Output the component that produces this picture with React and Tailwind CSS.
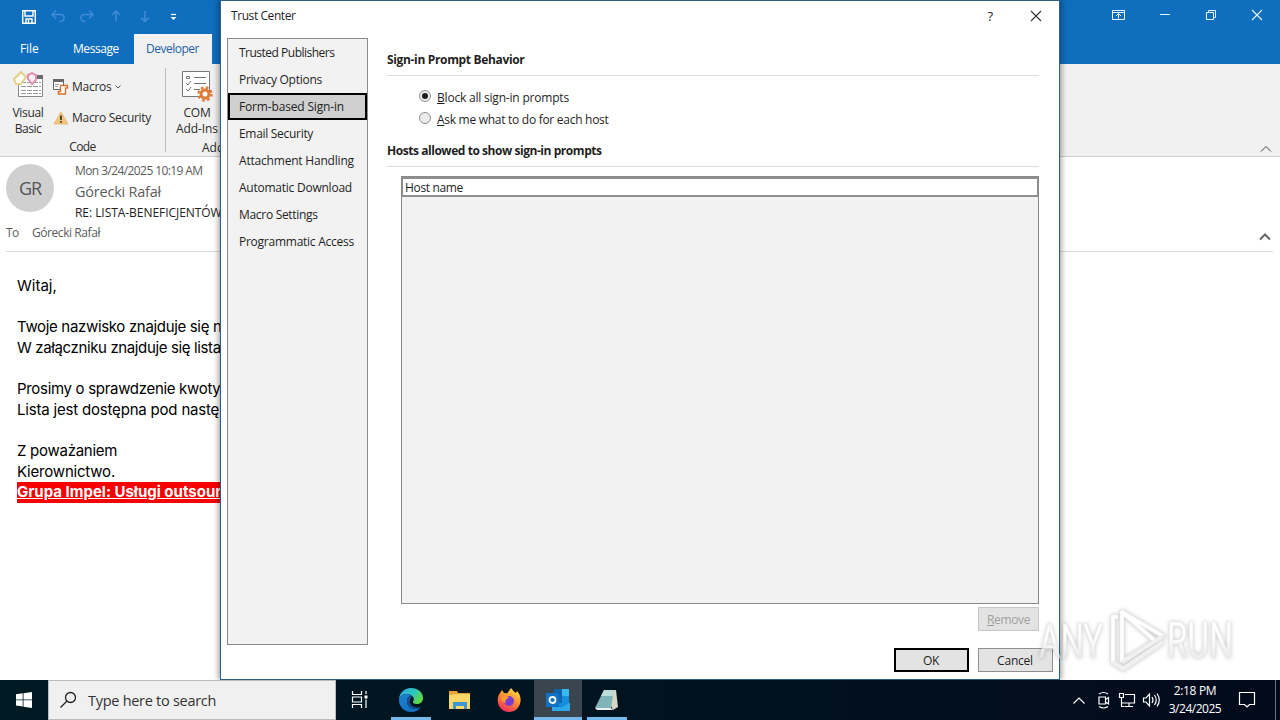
import React from "react";

const sidebar = [
  ["Trusted Publishers", "tracking-[-0.5px]"],
  ["Privacy Options", "tracking-[-0.27px]"],
  ["Form-based Sign-in", "tracking-[-0.16px]"],
  ["Email Security", "tracking-[-0.3px]"],
  ["Attachment Handling", "tracking-[-0.2px]"],
  ["Automatic Download", "tracking-[-0.24px]"],
  ["Macro Settings", "tracking-[-0.3px]"],
  ["Programmatic Access", "tracking-[-0.25px]"],
];

const mail = [
  ["Witaj,", "mt-0"],
  ["Twoje nazwisko znajduje się n", "mt-[21px] tracking-[-0.33px]"],
  ["W załączniku znajduje się lista", "mt-0 tracking-[-0.37px]"],
  ["Prosimy o sprawdzenie kwoty", "mt-[21px] tracking-[-0.31px]"],
  ["Lista jest dostępna pod nastę", "mt-0 tracking-[-0.19px]"],
  ["Z poważaniem", "mt-[21px] tracking-[-0.27px]"],
  ["Kierownictwo.", "mt-0 tracking-[-0.2px]"],
];

function TitleBar() {
  return (
    <div className="flex h-[34px] shrink-0 items-center justify-between text-white">
      <svg width="200" height="34" viewBox="0 0 200 34" fill="none">
        <path d="M22.7 10.7h12.6v12.6H22.7z" stroke="#fff" strokeWidth="1.4" />
        <path d="M25 11v5h8v-5M26 23v-4h6v4M28.500 20v3" stroke="#fff" strokeWidth="1.4" />
        <g stroke="#3f8bd6" strokeWidth="1.6">
          <path d="M56 10.500l-4 4 4 4M52.500 14.500h8c5 0 5 7-1 7" />
          <path d="M89 10.500l4 4-4 4M92.500 14.500h-8c-5 0-5 7 1 7" />
          <path d="M116 21.500V11M112 15l4-4 4 4" />
          <path d="M145 11v10.500M141 17.500l4 4 4-4" />
        </g>
        <path d="M171 14.500h5" stroke="#fff" strokeWidth="1.200" />
        <path d="M170.500 17h6l-3 3z" fill="#fff" />
      </svg>
      <svg width="180" height="34" viewBox="1100 0 180 34" fill="none" stroke="#e6f5ff">
        <path d="M1112.500 10.500h12v9h-12zM1112.500 12.500h12M1118.500 18.500v-5M1116 16l2.500-2.500 2.500 2.500" />
        <path d="M1160 14.500h10" />
        <path d="M1206.500 12.500h7v7h-7zM1208.500 12.500v-2h7v7h-2" />
        <path d="M1252 10l10 10M1262 10l-10 10" strokeWidth="1.100" />
      </svg>
    </div>
  );
}

function Tabs() {
  return (
    <div className="flex h-[30px] shrink-0 leading-[30px] text-white">
      <span className="w-[53px] pl-5 tracking-[-0.12px]">File</span>
      <span className="w-[81px] pl-5 tracking-[-0.45px]">Message</span>
      <span className="w-[78px] bg-[#f1f1f1] pl-3 tracking-[-0.49px] text-[#1f62a8]">Developer</span>
    </div>
  );
}

function Ribbon() {
  return (
    <div className="flex h-[93px] shrink-0 border-b border-[#cfcfcf] bg-[#f1f1f1] text-[#2b2b2b]">
      <div className="flex w-[165px] flex-col">
        <div className="flex h-[75px]">
          <div className="flex w-[56px] flex-col items-center pt-[6px] leading-4">
            <svg width="34" height="30" viewBox="0 0 34 30" fill="none" className="mb-[5px]">
              <path d="M7.500 6.500h24v20h-24z" fill="#fff" stroke="#888" />
              <path d="M25 5h7v4h-7z" fill="#6b6b6b" />
              <path d="M10 12.500h20M10 16.500h20M10 20.500h20M10 23.500h20" stroke="#9a9a9a" strokeDasharray="5 1" />
              <path d="M3 9l7-7 5 5-5 7H5z" fill="#fffdf2" stroke="#e6cf8a" strokeWidth="2" />
              <path d="M17 5l4-2 4 2v5l-4 4-4-5z" fill="#fdeef4" stroke="#df8fb0" strokeWidth="2" />
            </svg>
            <span className="tracking-[-0.33px]">Visual</span>
            <span className="tracking-[-0.48px]">Basic</span>
          </div>
          <div className="flex flex-col pt-[7px]">
            <div className="flex h-[31px] items-center">
              <svg width="16" height="18" viewBox="0 0 16 18" fill="none" className="-ml-[3px]">
                <path d="M.5 2.500h10v9H.5z" fill="#fff" stroke="#666" />
                <path d="M0 1h11v3H0z" fill="#666" />
                <path d="M2 6.500h4M2 8.500h3" stroke="#999" />
                <path d="M7.500 7.500h7v2.500h-2v6h-7v-2.500h2z" fill="#fff" stroke="#d8712c" strokeWidth="1.400" />
              </svg>
              <span className="ml-[3px] tracking-[-0.27px]">Macros</span>
              <svg width="8" height="6" viewBox="0 0 8 6" fill="none" className="ml-[3px]"><path d="M1.500 1.500L4 4l2.500-2.500" stroke="#555" /></svg>
            </div>
            <div className="flex h-[31px] items-center">
              <svg width="16" height="14" viewBox="0 0 16 14" className="-ml-[3px]">
                <path d="M8 1l7 12H1z" fill="#f3c57b" stroke="#e9bd78" strokeLinejoin="round" />
                <path d="M8 4.500v4.500M8 10v1.700" stroke="#333" strokeWidth="1.700" />
              </svg>
              <span className="ml-[3px] whitespace-nowrap tracking-[-0.29px]">Macro Security</span>
            </div>
          </div>
        </div>
        <span className="text-center leading-[18px] tracking-[-0.6px]">Code</span>
      </div>
      <div className="flex w-[114px] flex-col">
        <div className="flex h-[75px]">
          <div className="mt-1 h-[84px] w-px shrink-0 bg-[#bdbdbd]" />
          <div className="flex w-[62px] flex-col items-center pt-[6px] leading-4">
            <svg width="32" height="32" viewBox="0 0 32 32" fill="none" className="mb-[3px]">
              <path d="M1.500 1.500h27v25h-27z" fill="#fff" stroke="#777" />
              <path d="M13 7.500h12M13 13.500h12M13 19.500h6" stroke="#777" />
              <path d="M5.500 6.500h3v2h-3zM5 13l2 2 3-4M5 19l2 2 3-4" stroke="#777" />
              <circle cx="24" cy="24" r="4" fill="#fff" stroke="#e07b39" strokeWidth="3" />
              <circle cx="24" cy="24" r="6.500" stroke="#e07b39" strokeWidth="2.400" strokeDasharray="2.700 2.405" />
            </svg>
            <span className="tracking-[-0.2px]">COM</span>
            <span className="tracking-[-0.1px]">Add-Ins</span>
          </div>
        </div>
        <span className="pl-[37px] leading-[18px]">Add-ins</span>
      </div>
      <div className="flex flex-1 items-end justify-end pr-2 pb-[3px]">
        <svg width="12" height="8" viewBox="0 0 12 8" fill="none"><path d="M1 6.500l5-5 5 5" stroke="#444" /></svg>
      </div>
    </div>
  );
}

function MailHeader() {
  return (
    <div className="mr-[7px] ml-[6px] flex h-[95px] shrink-0 flex-col border-b border-[#dcdcdc] text-[#5c5c5c]">
      <div className="flex h-[66px]">
        <div className="mt-[7px] flex h-12 w-12 items-center justify-center rounded-full bg-[#d0d0d0] text-[18px] tracking-[-1px] text-[#555]">GR</div>
        <div className="ml-[21px] flex flex-col whitespace-nowrap pt-[5px]">
          <span className="leading-[18px] tracking-[-0.59px]">Mon 3/24/2025 10:19 AM</span>
          <span className="text-[14.5px] leading-[23px] tracking-[-0.23px]">Górecki Rafał</span>
          <span className="leading-[19px] tracking-[-0.05px] text-[#222]">RE: LISTA-BENEFICJENTÓW</span>
        </div>
      </div>
      <div className="flex h-[20px] items-center">
        <span className="w-[26px] tracking-[-0.6px]">To</span>
        <span className="flex-1 tracking-[-0.43px]">Górecki Rafał</span>
        <svg width="12" height="9" viewBox="0 0 12 9" fill="none" className="mt-[6px] mr-[2px]"><path d="M1 7.500l5-5 5 5" stroke="#666" strokeWidth="2" /></svg>
      </div>
    </div>
  );
}

function Mail() {
  return (
    <div className="flex flex-1 flex-col pt-[23.5px] pl-[17px] font-['Inter',sans-serif] text-[15px] leading-[20.6px] text-black">
      {mail.map(([t, c]) => <div key={t} className={c}>{t}</div>)}
      <div className="-mt-[0.7px] h-[21px] w-[290px] bg-[#f80000] font-bold whitespace-nowrap text-white underline">Grupa Impel: Usługi outsourcingowe</div>
    </div>
  );
}

function Radio({ on }) {
  return (
    <span className="mb-[3px] flex h-3 w-3 items-center justify-center rounded-full border border-[#8f8f8f] bg-[#ececec]">
      {on && <span className="h-[6px] w-[6px] rounded-full bg-[#1c1c1c]" />}
    </span>
  );
}

function Dialog() {
  return (
    <div className="absolute top-0 left-[220px] flex h-[680px] w-[840px] flex-col border border-[#2d5f8c] bg-white text-[#1f1f1f] shadow-[0_0_7px_rgba(0,0,0,0.55)]">
      <div className="flex h-[37px] shrink-0 items-start pl-[10px]">
        <span className="flex-1 leading-[30px] tracking-[-0.42px]">Trust Center</span>
        <span className="mr-[37px] text-[13px] leading-[31px]">?</span>
        <svg width="12" height="12" viewBox="0 0 12 12" fill="none" className="mt-[9px] mr-[17px]"><path d="M1 1l10 10M11 1L1 11" stroke="#333" strokeWidth="1.100" /></svg>
      </div>
      <div className="flex h-[610px] shrink-0 pl-[6px]">
        <div className="flex h-[607px] w-[141px] flex-col border border-[#8a8a8a] bg-[#f2f2f2]">
          {sidebar.map(([t, c], i) => (
            <div key={t} className={i === 2 ? "flex h-[27px] items-center border-2 border-black bg-[#d0d0d0] pl-[9px] whitespace-nowrap" : "flex h-[27px] items-center pl-[11px] whitespace-nowrap"}>
              <span className={c}>{t}</span>
            </div>
          ))}
        </div>
        <div className="ml-[19px] flex w-[652px] flex-col">
          <div className="flex h-[38px] items-end border-b border-[#dedede] pb-[6px]">
            <b className="leading-[18px] tracking-[-0.34px]">Sign-in Prompt Behavior</b>
          </div>
          <div className="mt-[10px] flex flex-col pl-8">
            <div className="flex h-[22px] items-center gap-[6px]"><Radio on /><span className="pt-px tracking-[-0.2px]"><u>B</u>lock all sign-in prompts</span></div>
            <div className="flex h-[22px] items-center gap-[6px]"><Radio /><span className="pt-px tracking-[-0.28px]"><u>A</u>sk me what to do for each host</span></div>
          </div>
          <div className="flex h-[37px] items-end border-b border-[#dedede] pb-[6px]">
            <b className="leading-[18px] tracking-[-0.45px]">Hosts allowed to show sign-in prompts</b>
          </div>
          <div className="mt-[9px] ml-[14px] flex h-[428px] flex-col border border-[#8a8a8a] bg-[#f2f2f2]">
            <div className="h-[20px] border-t-2 border-r border-b-2 border-l border-[#8e8e8e] bg-white pl-[2px] leading-[17px] tracking-[-0.34px]">Host name</div>
          </div>
          <div className="mt-[3px] flex h-6 w-[61px] shrink-0 items-center justify-center self-end border border-[#c6c6c6] bg-[#e3e3e3] pt-[2px] tracking-[-0.37px] text-[#a0a0a0]"><span><u>R</u>emove</span></div>
        </div>
      </div>
      <div className="flex gap-[9px] pl-[673px]">
        <div className="flex h-6 w-[75px] items-center justify-center border-2 border-black bg-[#e3e3e3] pt-px pr-px tracking-[-0.3px]">OK</div>
        <div className="flex h-6 w-[75px] items-center justify-center border border-[#8e8e8e] bg-[#e3e3e3] pt-px pr-px tracking-[-0.22px]">Cancel</div>
      </div>
    </div>
  );
}

function Watermark() {
  return (
    <svg className="absolute top-[600px] left-[1030px] opacity-75 drop-shadow-[0_0_2px_rgba(0,0,0,0.3)]" width="230" height="80" viewBox="0 0 230 80" fill="none">
      <defs>
        <linearGradient id="wm" x1="0" y1="0" x2="0" y2="1"><stop offset=".45" stopColor="#fff" /><stop offset=".75" stopColor="#e6e6e6" /></linearGradient>
      </defs>
      <g fill="url(#wm)" stroke="#e6e6e6" strokeWidth="0.7" fontFamily="Roboto, sans-serif" fontSize="49">
        <text transform="translate(9 58) scale(.67 1)">ANY</text>
        <text transform="translate(137 58) scale(.68 1)">RUN</text>
      </g>
      <g stroke="#dedede" strokeWidth="5" strokeLinejoin="round">
        <path d="M92 62V12l41 24-41 26M92 12l32 28M88 17h-5v45l10 7 40-27" />
      </g>
      <g stroke="#fff" strokeWidth="3.600" strokeLinejoin="round">
        <path d="M92 62V12l41 24M92 12l32 28M88 17h-5v45" />
      </g>
      <path d="M133 36L92 62M83 62l10 7 40-27" stroke="#ececec" strokeWidth="3.600" strokeLinejoin="round" />
    </svg>
  );
}

function TaskIcon({ children, className }) {
  return (
    <div className={"flex h-10 w-12 flex-col items-center justify-between " + (className || "")}>
      <svg width="24" height="24" viewBox="0 0 24 24" fill="none" className="mt-2">{children}</svg>
    </div>
  );
}

function Taskbar() {
  return (
    <div className="flex h-10 shrink-0 bg-linear-to-r from-[#001a24] via-[#01131f] to-[#020a1c] text-white">
      <div className="flex w-12 items-center justify-center">
        <svg width="16" height="16" viewBox="0 0 16 16" fill="#fff"><path d="M0 2.200l6.700-.9v6.200H0zM7.500 1.200L16 0v7.500H7.500zM0 8.300h6.700v6.200L0 13.600zM7.500 8.300H16V16l-8.500-1.200z" /></svg>
      </div>
      <div className="flex w-[288px] items-center border border-[#bcbcbc] bg-[#f0f0f0] text-[#333]">
        <svg width="18" height="18" viewBox="0 0 18 18" fill="none" className="ml-[10px]" stroke="#222" strokeWidth="1.300"><circle cx="11.500" cy="6.500" r="5" /><path d="M8 10l-6.500 6.500" /></svg>
        <span className="ml-[11px] pt-[2px] text-[14.5px] tracking-[-0.28px]">Type here to search</span>
      </div>
      <TaskIcon>
        <path d="M4.500 3v3.500h9V3M4.500 20v-3.500h9V20M4.500 9h9v5h-9zM18 3v3M18 11.500V20" stroke="#fff" strokeWidth="1.200" />
        <path d="M16.500 7.500h3v3h-3z" fill="#fff" />
      </TaskIcon>
      <div className="w-[3px]" />
      <TaskIcon className="[background:linear-gradient(#76b9ed,#76b9ed)_4px_37px/40px_3px_no-repeat]">
        <defs>
          <linearGradient id="eg" x1="0" y1="0" x2="1" y2=".5"><stop stopColor="#2aa5e0" /><stop offset=".6" stopColor="#2fc5c0" /><stop offset="1" stopColor="#61d846" /></linearGradient>
          <linearGradient id="eb" x1="0" y1="0" x2="0" y2="1"><stop stopColor="#1b7fd0" /><stop offset="1" stopColor="#1272c2" /></linearGradient>
        </defs>
        <path d="M0 12C0 5 5 0 12 0c8 0 12 5.500 12 10 0 4-3 6-6.500 6-3 0-4-1.200-3.500-2.200.6-1 .8-1.500.8-2.500C14.800 8 11 6 7.500 6 3.500 6 0 9 0 12z" fill="url(#eg)" />
        <path d="M0 12c0-3 3.500-6 7.500-6 1.500 0 3 .4 4.300 1.200C9 8.500 8 11 8 13.500c0 4.500 4 7.500 8 7.500 2.500 0 4.500-1 5.800-2C20 22 16.500 24 12 24 5 24 0 18.500 0 12z" fill="url(#eb)" />
        <path d="M11.800 7.200C9 8.500 8 11 8 13.500c0 4.500 4 7.500 8 7.500 2.500 0 4.500-1 5.800-2-6 1.500-11-1.500-11-5.500 0-1.800 1-3.200 2-4z" fill="#174f93" />
      </TaskIcon>
      <TaskIcon>
        <path d="M2 3h8l1 2h12v15H2z" fill="#e8a33d" />
        <path d="M2 7l9-1h12v15H2z" fill="#fbd768" />
        <path d="M6 21v-7h14v7h-3v-3H9v3z" fill="#3f95cf" />
      </TaskIcon>
      <TaskIcon className="pl-[3px]">
        <defs><linearGradient id="ff" x1=".8" y1="0" x2=".3" y2="1"><stop stopColor="#ffe14a" /><stop offset=".45" stopColor="#ff9330" /><stop offset="1" stopColor="#ee2a60" /></linearGradient></defs>
        <path d="M3 5l2-3 2 3c1 0 2 0 3 .5L14 0c2 2 3 4 5 5l1-2c3 3 4 7 3.500 10.500C22.500 20 18 24 12 24S1 19.500.7 13C.5 10 1.500 7 3 5z" fill="url(#ff)" />
        <circle cx="12" cy="13" r="5" fill="#7d3ccf" />
        <path d="M4 10c3-3 6-2 8-1l-2 2c-2 1-2 3-1 4-3-1-5-2-5-5z" fill="#ff9a2f" />
      </TaskIcon>
      <TaskIcon className="ml-[3px] bg-[#39464f] [background-image:linear-gradient(#76b9ed,#76b9ed)] [background-position:0_37px] [background-size:48px_3px] bg-no-repeat">
        <path d="M8 1h15v19H8z" fill="#1490df" />
        <path d="M8 1h8v7H8z" fill="#0d62a8" /><path d="M16 1h7v7h-7z" fill="#38b8f2" /><path d="M8 8h8v7H8z" fill="#1066b5" />
        <path d="M6 14l9 6 10-6v9H6z" fill="#2fa8e8" />
        <path d="M0 5h13v14H0z" fill="#0f70c4" />
        <circle cx="6.500" cy="12" r="3" stroke="#fff" strokeWidth="1.800" />
      </TaskIcon>
      <TaskIcon className="ml-px [background:linear-gradient(#76b9ed,#76b9ed)_4px_37px/40px_3px_no-repeat]">
        <path d="M9 3l12-1 2 17-5 3z" fill="#d8d6c6" />
        <path d="M9 2h10l-3 18H0z" fill="#7fb5b8" />
        <path d="M9 2h10l-1 6H6z" fill="#bcdcdb" />
        <path d="M0 20h16l2 2H2z" fill="#e8eeee" />
      </TaskIcon>
      <div className="flex-1" />
      <svg width="100" height="40" viewBox="1064 0 100 40" fill="none" stroke="#fff" strokeWidth="1.200">
        <path d="M1073.500 23.500l5.500-5.500 5.500 5.500" />
        <path d="M1099 17h6.500v7h-6.500zM1105.500 19.500l3-2v6.500l-3-2M1099 14q4.500-3 9 0M1099 26.500q4.500 3 9 0" />
        <path d="M1125 14.500h9.500v8.500H1122M1129 23v4M1125 26.500h8M1119.500 13.500h4v4h-4zM1121.500 18v8.500h3" />
        <path d="M1143.500 18h2.500l3.500-4v12l-3.500-4h-2.500zM1152 17q2 3 0 6M1154.500 15q3.500 5 0 10M1157 13.500q4.500 6.500 0 13" />
      </svg>
      <div className="flex w-[62px] flex-col items-center pt-[2px] leading-[18px]">
        <span className="tracking-[-0.34px]">2:18 PM</span>
        <span className="tracking-[-0.48px]">3/24/2025</span>
      </div>
      <svg width="54" height="40" viewBox="1226 0 54 40" fill="none" stroke="#fff" strokeWidth="1.200">
        <path d="M1239.500 12.500h15v12h-5l-2.500 2.500-2.500-2.500h-5z" />
        <path d="M1275.500 0v40" stroke="#6a7480" strokeWidth="1" />
      </svg>
    </div>
  );
}

export default function App() {
  return (
    <div className="relative flex h-[720px] w-[1280px] flex-col overflow-hidden bg-white font-['Open_Sans',sans-serif] text-[12px]">
      <div className="flex flex-col bg-[#106ebe]">
        <TitleBar />
        <Tabs />
      </div>
      <Ribbon />
      <MailHeader />
      <Mail />
      <Dialog />
      <Watermark />
      <div className="relative"><Taskbar /></div>
    </div>
  );
}
